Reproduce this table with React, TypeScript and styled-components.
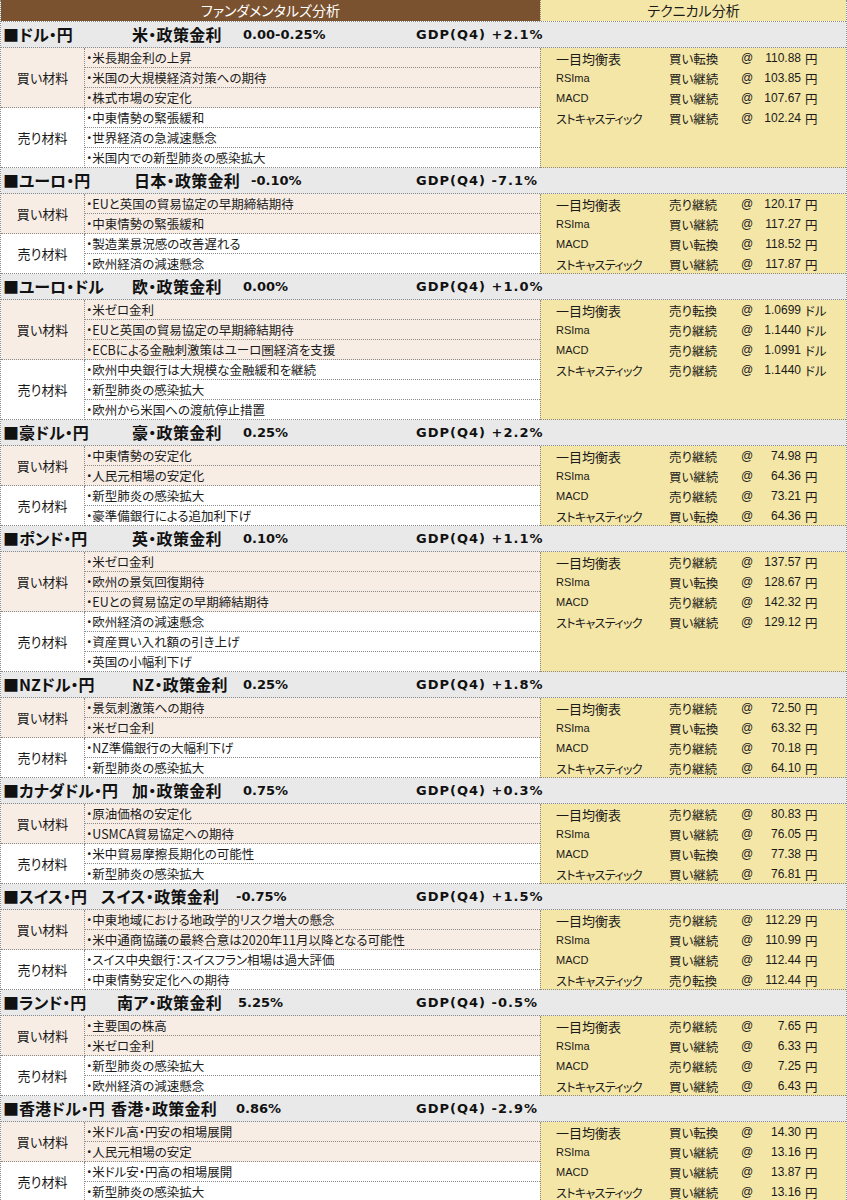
import styled, { createGlobalStyle } from 'styled-components';

const GlobalStyle = createGlobalStyle`
  body {
    margin: 0;
    background: #ffffff;
    font-family: "Noto Sans CJK JP", "Liberation Sans", sans-serif;
    font-feature-settings: "palt";
    color: #1a1a1a;
  }
`;

type Tech = [string, string];

type Section = {
  pair: string;
  policy: string;
  policyX: number;
  rateX: number;
  rate: string;
  gdp: string;
  buy: string[];
  sell: string[];
  unit: string;
  tech: Tech[];
};

const TECH_LABELS = ['一目均衡表', 'RSIma', 'MACD', 'ストキャスティック'];

const sections: Section[] = [
  {
    pair: 'ドル・円',
    policy: '米・政策金利',
    policyX: 131,
    rateX: 242,
    rate: '0.00-0.25%',
    gdp: '+2.1%',
    buy: ['米長期金利の上昇', '米国の大規模経済対策への期待', '株式市場の安定化'],
    sell: ['中東情勢の緊張緩和', '世界経済の急減速懸念', '米国内での新型肺炎の感染拡大'],
    unit: '円',
    tech: [
      ['買い転換', '110.88'],
      ['買い継続', '103.85'],
      ['買い継続', '107.67'],
      ['買い継続', '102.24'],
    ],
  },
  {
    pair: 'ユーロ・円',
    policy: '日本・政策金利',
    policyX: 133,
    rateX: 250,
    rate: '-0.10%',
    gdp: '-7.1%',
    buy: ['EUと英国の貿易協定の早期締結期待', '中東情勢の緊張緩和'],
    sell: ['製造業景況感の改善遅れる', '欧州経済の減速懸念'],
    unit: '円',
    tech: [
      ['売り継続', '120.17'],
      ['買い継続', '117.27'],
      ['買い転換', '118.52'],
      ['買い継続', '117.87'],
    ],
  },
  {
    pair: 'ユーロ・ドル',
    policy: '欧・政策金利',
    policyX: 131,
    rateX: 242,
    rate: '0.00%',
    gdp: '+1.0%',
    buy: ['米ゼロ金利', 'EUと英国の貿易協定の早期締結期待', 'ECBによる金融刺激策はユーロ圏経済を支援'],
    sell: ['欧州中央銀行は大規模な金融緩和を継続', '新型肺炎の感染拡大', '欧州から米国への渡航停止措置'],
    unit: 'ドル',
    tech: [
      ['売り転換', '1.0699'],
      ['売り継続', '1.1440'],
      ['売り継続', '1.0991'],
      ['売り継続', '1.1440'],
    ],
  },
  {
    pair: '豪ドル・円',
    policy: '豪・政策金利',
    policyX: 131,
    rateX: 242,
    rate: '0.25%',
    gdp: '+2.2%',
    buy: ['中東情勢の安定化', '人民元相場の安定化'],
    sell: ['新型肺炎の感染拡大', '豪準備銀行による追加利下げ'],
    unit: '円',
    tech: [
      ['売り継続', '74.98'],
      ['買い継続', '64.36'],
      ['売り継続', '73.21'],
      ['買い転換', '64.36'],
    ],
  },
  {
    pair: 'ポンド・円',
    policy: '英・政策金利',
    policyX: 131,
    rateX: 242,
    rate: '0.10%',
    gdp: '+1.1%',
    buy: ['米ゼロ金利', '欧州の景気回復期待', 'EUとの貿易協定の早期締結期待'],
    sell: ['欧州経済の減速懸念', '資産買い入れ額の引き上げ', '英国の小幅利下げ'],
    unit: '円',
    tech: [
      ['売り継続', '137.57'],
      ['買い転換', '128.67'],
      ['売り継続', '142.32'],
      ['買い継続', '129.12'],
    ],
  },
  {
    pair: 'NZドル・円',
    policy: 'NZ・政策金利',
    policyX: 131,
    rateX: 242,
    rate: '0.25%',
    gdp: '+1.8%',
    buy: ['景気刺激策への期待', '米ゼロ金利'],
    sell: ['NZ準備銀行の大幅利下げ', '新型肺炎の感染拡大'],
    unit: '円',
    tech: [
      ['売り継続', '72.50'],
      ['買い転換', '63.32'],
      ['売り継続', '70.18'],
      ['売り継続', '64.10'],
    ],
  },
  {
    pair: 'カナダドル・円',
    policy: '加・政策金利',
    policyX: 131,
    rateX: 242,
    rate: '0.75%',
    gdp: '+0.3%',
    buy: ['原油価格の安定化', 'USMCA貿易協定への期待'],
    sell: ['米中貿易摩擦長期化の可能性', '新型肺炎の感染拡大'],
    unit: '円',
    tech: [
      ['売り継続', '80.83'],
      ['買い継続', '76.05'],
      ['買い転換', '77.38'],
      ['買い継続', '76.81'],
    ],
  },
  {
    pair: 'スイス・円',
    policy: 'スイス・政策金利',
    policyX: 100,
    rateX: 235,
    rate: '-0.75%',
    gdp: '+1.5%',
    buy: ['中東地域における地政学的リスク増大の懸念', '米中通商協議の最終合意は2020年11月以降となる可能性'],
    sell: ['スイス中央銀行：スイスフラン相場は過大評価', '中東情勢安定化への期待'],
    unit: '円',
    tech: [
      ['売り継続', '112.29'],
      ['買い継続', '110.99'],
      ['買い継続', '112.44'],
      ['売り転換', '112.44'],
    ],
  },
  {
    pair: 'ランド・円',
    policy: '南ア・政策金利',
    policyX: 116,
    rateX: 237,
    rate: '5.25%',
    gdp: '-0.5%',
    buy: ['主要国の株高', '米ゼロ金利'],
    sell: ['新型肺炎の感染拡大', '欧州経済の減速懸念'],
    unit: '円',
    tech: [
      ['売り継続', '7.65'],
      ['買い継続', '6.33'],
      ['売り継続', '7.25'],
      ['買い継続', '6.43'],
    ],
  },
  {
    pair: '香港ドル・円',
    policy: '香港・政策金利',
    policyX: 110,
    rateX: 235,
    rate: '0.86%',
    gdp: '-2.9%',
    buy: ['米ドル高・円安の相場展開', '人民元相場の安定'],
    sell: ['米ドル安・円高の相場展開', '新型肺炎の感染拡大'],
    unit: '円',
    tech: [
      ['買い転換', '14.30'],
      ['買い継続', '13.16'],
      ['買い継続', '13.87'],
      ['買い継続', '13.16'],
    ],
  },
];

const DOT = '1px dotted #8a8a8a';

const Sheet = styled.div`
  width: 847px;
  box-sizing: border-box;
  border-left: ${DOT};
  border-right: ${DOT};
`;

const TopHeader = styled.div`
  display: grid;
  grid-template-columns: 539px 1fr;
  height: 22px;
  border-bottom: ${DOT};
  box-sizing: border-box;
`;

const FundHead = styled.div`
  background: #7b5230;
  color: #ffffff;
  font-size: 14px;
  line-height: 21px;
  text-align: center;
`;

const TechHead = styled.div`
  background: #f4e6a6;
  color: #1a1a1a;
  font-size: 14px;
  line-height: 21px;
  text-align: center;
  border-left: ${DOT};
`;

const SectionBar = styled.div<{ $policyX: number; $rateX: number }>`
  display: grid;
  grid-template-columns: ${(p) => `${p.$policyX}px ${p.$rateX - p.$policyX}px ${415 - p.$rateX}px 1fr`};
  height: 26px;
  box-sizing: border-box;
  background: #e9e9e9;
  border-bottom: ${DOT};
  font-weight: 700;
  line-height: 25px;
  white-space: nowrap;
  color: #111;
`;

const Pair = styled.div`
  padding-left: 2px;
  font-size: 16px;
`;

const Policy = styled.div`
  font-size: 16px;
  letter-spacing: 0.3px;
`;

const Rate = styled.div`
  font-family: "DejaVu Sans", "Noto Sans CJK JP", sans-serif;
  font-size: 13px;
`;

const Gdp = styled.div`
  font-family: "DejaVu Sans", "Noto Sans CJK JP", sans-serif;
  font-size: 13px;
  letter-spacing: 1px;
`;

const Body = styled.div<{ $rows: number }>`
  display: grid;
  grid-template-columns: 84px 455px 1fr;
  grid-template-rows: ${(p) => `repeat(${p.$rows}, 20px)`};
`;

const Label = styled.div<{ $kind: 'buy' | 'sell'; $start: number; $span: number }>`
  grid-column: 1;
  grid-row: ${(p) => `${p.$start} / span ${p.$span}`};
  display: flex;
  align-items: center;
  justify-content: center;
  background: ${(p) => (p.$kind === 'buy' ? '#f7ede5' : '#ffffff')};
  border-right: ${DOT};
  border-bottom: ${DOT};
  font-size: 13px;
`;

const Item = styled.div<{ $kind: 'buy' | 'sell' }>`
  grid-column: 2;
  background: ${(p) => (p.$kind === 'buy' ? '#f7ede5' : '#ffffff')};
  border-bottom: ${DOT};
  box-sizing: border-box;
  padding-left: 1px;
  font-size: 12.5px;
  line-height: 19px;
  white-space: nowrap;
  overflow: hidden;
`;

const TechBox = styled.div`
  grid-column: 3;
  grid-row: 1 / -1;
  background: #f4e6a6;
  border-left: ${DOT};
  border-bottom: ${DOT};
  padding-left: 15px;
  overflow: hidden;
`;

const TechLine = styled.div`
  display: grid;
  grid-template-columns: 113px 72px 22px 38px auto;
  height: 20px;
  align-items: center;
  font-size: 12.5px;
  white-space: nowrap;
`;

const TechName = styled.span<{ $kind: 'kanji' | 'latin' | 'kana' }>`
  font-size: ${(p) => (p.$kind === 'latin' ? '11px' : p.$kind === 'kana' ? '12px' : '13px')};
  font-family: ${(p) => (p.$kind === 'latin' ? '"Liberation Sans", sans-serif' : 'inherit')};
  letter-spacing: ${(p) => (p.$kind === 'kana' ? '-0.6px' : '0')};
`;

const At = styled.span`
  font-family: "Liberation Sans", sans-serif;
  font-size: 12px;
`;

const Value = styled.span`
  font-family: "Liberation Sans", sans-serif;
  text-align: right;
  font-size: 12px;
`;

const Unit = styled.span`
  padding-left: 4px;
  font-size: 12.5px;
`;

const nameKind = (i: number) => (i === 0 ? 'kanji' : i === 3 ? 'kana' : 'latin');

function SectionBlock({ s }: { s: Section }) {
  const rows = s.buy.length + s.sell.length;
  return (
    <>
      <SectionBar $policyX={s.policyX} $rateX={s.rateX}>
        <Pair>■{s.pair}</Pair>
        <Policy>{s.policy}</Policy>
        <Rate>{s.rate}</Rate>
        <Gdp>GDP(Q4) {s.gdp}</Gdp>
      </SectionBar>
      <Body $rows={rows}>
        <Label $kind="buy" $start={1} $span={s.buy.length}>
          買い材料
        </Label>
        <Label $kind="sell" $start={s.buy.length + 1} $span={s.sell.length}>
          売り材料
        </Label>
        {s.buy.map((t, i) => (
          <Item key={'b' + i} $kind="buy">
            ・{t}
          </Item>
        ))}
        {s.sell.map((t, i) => (
          <Item key={'s' + i} $kind="sell">
            ・{t}
          </Item>
        ))}
        <TechBox>
          {s.tech.map(([signal, value], i) => (
            <TechLine key={i}>
              <TechName $kind={nameKind(i)}>{TECH_LABELS[i]}</TechName>
              <span>{signal}</span>
              <At>@</At>
              <Value>{value}</Value>
              <Unit>{s.unit}</Unit>
            </TechLine>
          ))}
        </TechBox>
      </Body>
    </>
  );
}

export default function App() {
  return (
    <>
      <GlobalStyle />
      <Sheet>
        <TopHeader>
          <FundHead>ファンダメンタルズ分析</FundHead>
          <TechHead>テクニカル分析</TechHead>
        </TopHeader>
        {sections.map((s) => (
          <SectionBlock key={s.pair} s={s} />
        ))}
      </Sheet>
    </>
  );
}
